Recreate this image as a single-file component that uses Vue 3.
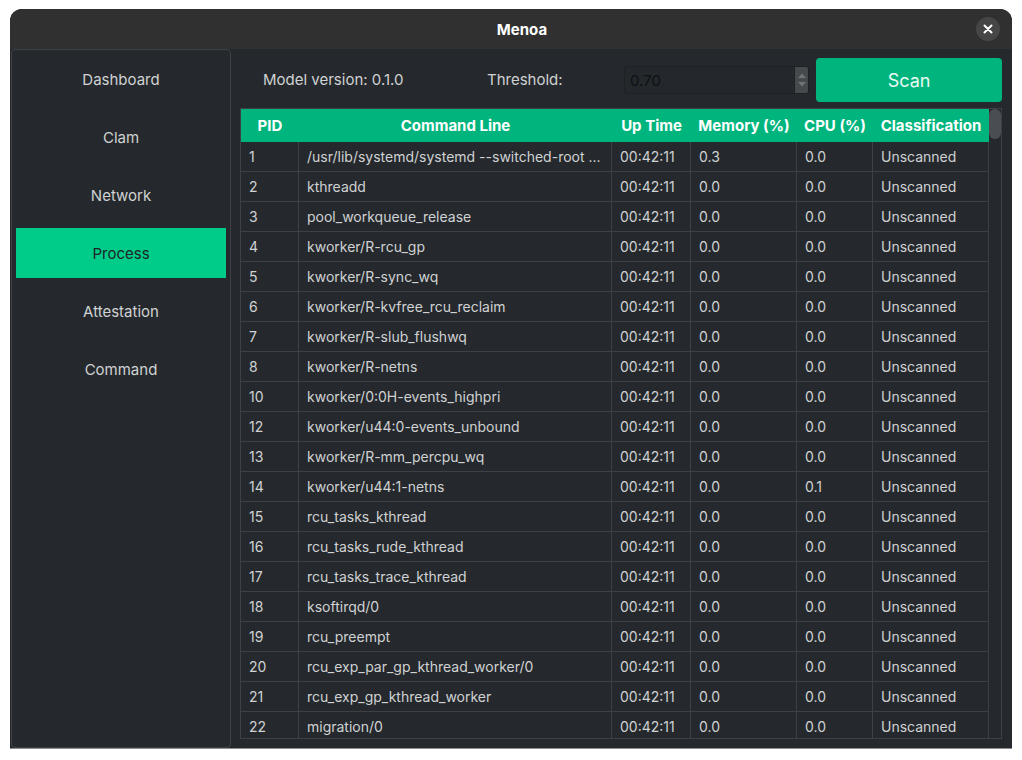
<template>
	<div class="window">
		<header class="titlebar">
			<span class="title">Menoa</span>
			<button class="close" aria-label="Close">
				<svg width="10" height="10" viewBox="0 0 10 10"><path d="M1.5 1.5 8.5 8.5M8.5 1.5 1.5 8.5" stroke="#fff" stroke-width="2" stroke-linecap="round"/></svg>
			</button>
		</header>
		<div class="body">
			<nav class="sidebar">
				<a v-for="item in navItems" :key="item" class="nav-item" :class="{ active: item === 'Process' }">{{ item }}</a>
			</nav>
			<main class="content">
				<div class="toolbar">
					<span class="version">Model version: 0.1.0</span>
					<span class="threshold">Threshold:</span>
					<div class="spin">
						<span class="spin-value">0.70</span>
						<div class="spin-buttons">
							<svg width="12" height="9" viewBox="0 0 12 9"><path d="M6 2.5 10 7H2Z" fill="#6f7376"/></svg>
							<svg width="12" height="9" viewBox="0 0 12 9"><path d="M6 6.5 10 2H2Z" fill="#6f7376"/></svg>
						</div>
					</div>
					<button class="scan">Scan</button>
				</div>
				<div class="table-frame">
					<div class="table-wrap">
						<table>
							<colgroup>
								<col v-for="w in colWidths" :key="w" :style="{ width: w + 'px' }" />
							</colgroup>
							<thead>
								<tr>
									<th v-for="h in headers" :key="h">{{ h }}</th>
								</tr>
							</thead>
							<tbody>
								<tr v-for="row in rows" :key="row.pid">
									<td>{{ row.pid }}</td>
									<td>{{ row.cmd }}</td>
									<td>00:42:11</td>
									<td>{{ row.mem }}</td>
									<td>{{ row.cpu }}</td>
									<td>Unscanned</td>
								</tr>
							</tbody>
						</table>
					</div>
					<div class="scrollbar"><div class="thumb"></div></div>
				</div>
			</main>
		</div>
	</div>
</template>

<script setup>
const navItems = ['Dashboard', 'Clam', 'Network', 'Process', 'Attestation', 'Command']
const headers = ['PID', 'Command Line', 'Up Time', 'Memory (%)', 'CPU (%)', 'Classification']
const colWidths = [58, 313, 79, 106, 76, 116]

const procs = [
	[1, '/usr/lib/systemd/systemd --switched-root ...', '0.3', '0.0'],
	[2, 'kthreadd'],
	[3, 'pool_workqueue_release'],
	[4, 'kworker/R-rcu_gp'],
	[5, 'kworker/R-sync_wq'],
	[6, 'kworker/R-kvfree_rcu_reclaim'],
	[7, 'kworker/R-slub_flushwq'],
	[8, 'kworker/R-netns'],
	[10, 'kworker/0:0H-events_highpri'],
	[12, 'kworker/u44:0-events_unbound'],
	[13, 'kworker/R-mm_percpu_wq'],
	[14, 'kworker/u44:1-netns', '0.0', '0.1'],
	[15, 'rcu_tasks_kthread'],
	[16, 'rcu_tasks_rude_kthread'],
	[17, 'rcu_tasks_trace_kthread'],
	[18, 'ksoftirqd/0'],
	[19, 'rcu_preempt'],
	[20, 'rcu_exp_par_gp_kthread_worker/0'],
	[21, 'rcu_exp_gp_kthread_worker'],
	[22, 'migration/0']
]
const rows = procs.map(([pid, cmd, mem = '0.0', cpu = '0.0']) => ({ pid, cmd, mem, cpu }))
</script>

<style>
html, body {
	background: #fff;
}
</style>

<style scoped>
.window {
	width: 1002px;
	height: 740px;
	margin: 9px 0 0 10px;
	border-radius: 12px 12px 0 0;
	background: #25292d;
	border-bottom: 1px solid #8b8d8f;
	box-sizing: border-box;
	display: flex;
	flex-direction: column;
	overflow: hidden;
	font-family: Inter, "Liberation Sans", sans-serif;
	color: #d0d2d3;
}
.titlebar {
	height: 40px;
	flex: none;
	padding-left: 22px;
	background: #303030;
	display: flex;
	align-items: center;
	justify-content: center;
	position: relative;
}
.title {
	font-size: 15px;
	font-weight: 700;
	color: #fff;
}
.close {
	position: absolute;
	right: 12px;
	top: 8px;
	width: 24px;
	height: 24px;
	padding: 0;
	border: none;
	border-radius: 50%;
	background: #464646;
	display: flex;
	align-items: center;
	justify-content: center;
}
.body {
	flex: 1;
	min-height: 0;
	display: flex;
}
.sidebar {
	width: 220px;
	margin-left: 1px;
	box-sizing: border-box;
	flex: none;
	border: 1px solid #3d4145;
	border-radius: 4px;
	padding: 4px;
	display: flex;
	flex-direction: column;
	gap: 8px;
}
.nav-item {
	height: 50px;
	flex: none;
	display: flex;
	align-items: center;
	justify-content: center;
	font-size: 15px;
}
.nav-item.active {
	background: #00cc8a;
	color: #1f2427;
}
.content {
	flex: 1;
	min-width: 0;
	padding: 9px 10px 9px 9px;
	display: flex;
	flex-direction: column;
}
.toolbar {
	height: 44px;
	flex: none;
	display: flex;
	align-items: center;
	font-size: 15px;
	margin-bottom: 6px;
}
.version {
	width: 225px;
	padding: 0 0 2px 23px;
	box-sizing: border-box;
}
.threshold {
	width: 159px;
	padding: 0 0 2px 22px;
	box-sizing: border-box;
}
.spin {
	width: 185px;
	height: 28px;
	box-sizing: border-box;
	border: 1px solid #1e2225;
	border-radius: 3px;
	background: #24282c;
	display: flex;
	align-items: center;
	justify-content: space-between;
}
.spin-value {
	padding-left: 5px;
	font-size: 15px;
	color: #0e1012;
}
.spin-buttons {
	width: 13px;
	height: 26px;
	background: #464a4d;
	border-left: 1px solid #1e2225;
	border-radius: 0 2px 2px 0;
	display: flex;
	flex-direction: column;
	justify-content: center;
	align-items: center;
}
.spin-buttons svg {
	display: block;
}
.scan {
	width: 186px;
	height: 44px;
	margin-left: 7px;
	border: none;
	border-radius: 4px;
	background: #00b57d;
	color: #eafaf4;
	font-family: inherit;
	font-size: 18px;
}
.table-frame {
	flex: 1;
	min-height: 0;
	border: 1px solid #3d4145;
	display: flex;
}
.table-wrap {
	width: 748px;
	flex: none;
	overflow: hidden;
}
table {
	width: 748px;
	table-layout: fixed;
	border-collapse: separate;
	border-spacing: 0;
}
th {
	height: 33px;
	padding: 0;
	background: #00b57d;
	color: #fff;
	font-size: 15px;
	font-weight: 700;
	text-align: center;
}
td {
	height: 30px;
	padding: 0 8px;
	box-sizing: border-box;
	font-size: 14px;
	border-right: 1px solid #3d4145;
	border-bottom: 1px solid #3d4145;
	white-space: nowrap;
	overflow: hidden;
}
.scrollbar {
	flex: 1;
	position: relative;
}
.thumb {
	position: absolute;
	top: 0;
	left: 0;
	right: 0;
	height: 30px;
	border-radius: 6px;
	background: #4a4e52;
}
</style>
